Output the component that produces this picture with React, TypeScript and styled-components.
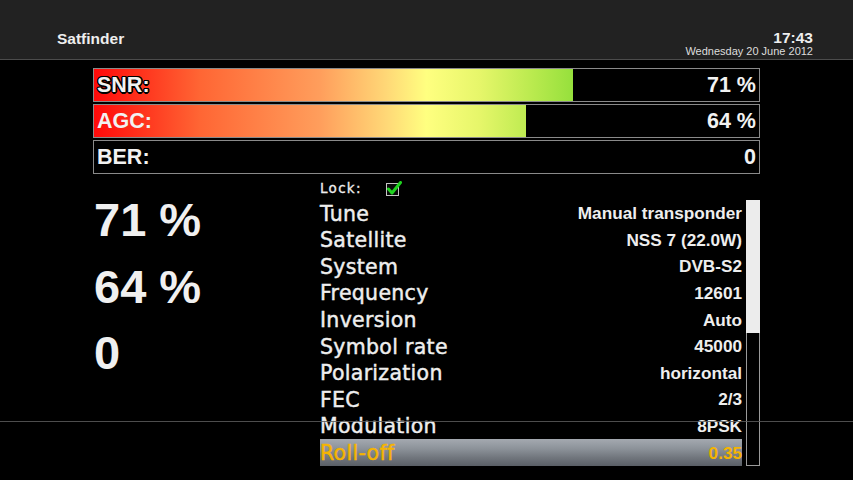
import React from "react";
import styled, { createGlobalStyle } from "styled-components";

const GlobalStyle = createGlobalStyle`
  html, body {
    margin: 0;
    padding: 0;
    background: #000;
  }
  * {
    box-sizing: border-box;
  }
`;

const Screen = styled.div`
  position: relative;
  width: 853px;
  height: 480px;
  overflow: hidden;
  background: #000;
  color: #f0f0f0;
  font-family: "Liberation Sans", Arial, sans-serif;
`;

const Header = styled.header`
  height: 60px;
  background: #222;
  border-bottom: 1px solid #4c4c4c;
  display: flex;
  align-items: flex-end;
  justify-content: space-between;
  padding: 0 40px 2px 57px;
`;

const Title = styled.div`
  font-size: 15.5px;
  font-weight: bold;
  color: #eee;
  padding-bottom: 9px;
`;

const Clock = styled.div`
  display: flex;
  flex-direction: column;
  align-items: flex-end;
  line-height: 1;
`;

const Time = styled.div`
  font-size: 15.5px;
  font-weight: bold;
  color: #eee;
`;

const DateText = styled.div`
  font-size: 11px;
  color: #ddd;
  margin-top: 1px;
`;

const Bars = styled.div`
  display: flex;
  flex-direction: column;
  gap: 2px;
  margin: 8px 0 0 93px;
  width: 667px;
`;

const BarTrack = styled.div`
  position: relative;
  height: 34px;
  border: 1px solid #8a8a8a;
  background: #000;
  display: flex;
  align-items: center;
  justify-content: space-between;
  padding: 0 3px 0 3px;
`;

const BarFill = styled.div<{ $pct: number }>`
  position: absolute;
  left: 0;
  top: 0;
  bottom: 0;
  width: ${(p) => p.$pct}%;
  background: linear-gradient(
    90deg,
    #ff0a0a 0%,
    #ff6634 16%,
    #ff9e5c 34%,
    #ffd877 44%,
    #ffff80 50%,
    #e6f66a 58%,
    #b9ea4e 66%,
    #96e03c 72%,
    #70d42a 100%
  );
  background-size: ${(p) => (p.$pct > 0 ? 10000 / p.$pct : 100)}% 100%;
  background-position: left top;
`;

const BarLabel = styled.span<{ $outline?: boolean }>`
  position: relative;
  font-size: 21.5px;
  font-weight: bold;
  color: #f2f2f2;
  text-shadow: ${(p) =>
    p.$outline
      ? "-1.5px 0 #000, 1.5px 0 #000, 0 -1.5px #000, 0 1.5px #000, -1px -1px #000, 1px 1px #000, -1px 1px #000, 1px -1px #000"
      : "none"};
`;

const BarValue = styled.span`
  position: relative;
  font-size: 21.5px;
  font-weight: bold;
  color: #f2f2f2;
`;

const Lower = styled.div`
  display: flex;
  margin-left: 93px;
`;

const BigColumn = styled.div`
  width: 227px;
  padding-top: 13px;
  padding-left: 1px;
  display: flex;
  flex-direction: column;
`;

const BigValue = styled.div`
  font-size: 47px;
  font-weight: bold;
  line-height: 66.5px;
  color: #f0f0f0;
`;

const Details = styled.div`
  width: 440px;
  display: flex;
  flex-direction: column;
`;

const LockRow = styled.div`
  height: 26px;
  display: flex;
  align-items: center;
  gap: 24px;
  padding-top: 2px;
  font-family: "DejaVu Sans", sans-serif;
  font-size: 13.5px;
  letter-spacing: 1.3px;
  color: #eee;
  -webkit-text-stroke: 0.3px #eee;
`;

const ListArea = styled.div`
  display: flex;
  gap: 4px;
`;

const List = styled.div`
  width: 423px;
  display: flex;
  flex-direction: column;
`;

const Row = styled.div<{ $selected?: boolean }>`
  height: 26.6px;
  display: flex;
  align-items: center;
  justify-content: space-between;
  color: ${(p) => (p.$selected ? "#f5b400" : "#eee")};
  background: ${(p) =>
    p.$selected
      ? "linear-gradient(180deg, #a4a9b0 0%, #8d939a 35%, #70757c 70%, #5a5f66 100%)"
      : "transparent"};
`;

const RowLabel = styled.span`
  font-family: "DejaVu Sans", sans-serif;
  font-size: 20.5px;
  line-height: 1;
  padding-top: 1px;
  letter-spacing: 0.3px;
  -webkit-text-stroke: 0.45px currentColor;
`;

const RowValue = styled.span`
  font-size: 17.2px;
  font-weight: bold;
  line-height: 1;
  padding-top: 1px;
`;

const ScrollTrack = styled.div`
  width: 14px;
  height: 266px;
  display: flex;
  flex-direction: column;
  border: 1px solid #9a9a9a;
  border-top: none;
`;

const ScrollThumb = styled.div`
  height: 133px;
  margin: 0 -1px;
  background: #ececec;
`;

const ScanLine = styled.div`
  position: absolute;
  left: 0;
  right: 0;
  top: 421px;
  height: 1px;
  background: #5a5a5a;
  opacity: 0.85;
`;

function CheckBox() {
  return (
    <svg width="16" height="15" viewBox="0 0 16 15">
      <rect x="0.5" y="2.5" width="12" height="12" fill="#0a0a0a" stroke="#c4c4c4" strokeWidth="1" />
      <path d="M2.5 8 L6 12 L14.5 1.5" fill="none" stroke="#1fd31f" strokeWidth="3" strokeLinecap="round" strokeLinejoin="round" />
    </svg>
  );
}

const bars = [
  { label: "SNR:", value: "71 %", pct: 72, outline: true },
  { label: "AGC:", value: "64 %", pct: 65 },
  { label: "BER:", value: "0", pct: 0 },
];

const rows = [
  ["Tune", "Manual transponder"],
  ["Satellite", "NSS 7 (22.0W)"],
  ["System", "DVB-S2"],
  ["Frequency", "12601"],
  ["Inversion", "Auto"],
  ["Symbol rate", "45000"],
  ["Polarization", "horizontal"],
  ["FEC", "2/3"],
  ["Modulation", "8PSK"],
  ["Roll-off", "0.35"],
];

export default function App() {
  return (
    <>
      <GlobalStyle />
      <Screen>
        <Header>
          <Title>Satfinder</Title>
          <Clock>
            <Time>17:43</Time>
            <DateText>Wednesday 20 June 2012</DateText>
          </Clock>
        </Header>

        <Bars>
          {bars.map((b) => (
            <BarTrack key={b.label}>
              {b.pct > 0 && <BarFill $pct={b.pct} />}
              <BarLabel $outline={b.outline}>{b.label}</BarLabel>
              <BarValue>{b.value}</BarValue>
            </BarTrack>
          ))}
        </Bars>

        <Lower>
          <BigColumn>
            <BigValue>71 %</BigValue>
            <BigValue>64 %</BigValue>
            <BigValue>0</BigValue>
          </BigColumn>
          <Details>
            <LockRow>
              <span>Lock:</span>
              <CheckBox />
            </LockRow>
            <ListArea>
              <List>
                {rows.map(([label, value]) => (
                  <Row key={label} $selected={label === "Roll-off"}>
                    <RowLabel>{label}</RowLabel>
                    <RowValue>{value}</RowValue>
                  </Row>
                ))}
              </List>
              <ScrollTrack>
                <ScrollThumb />
              </ScrollTrack>
            </ListArea>
          </Details>
        </Lower>

        <ScanLine />
      </Screen>
    </>
  );
}
